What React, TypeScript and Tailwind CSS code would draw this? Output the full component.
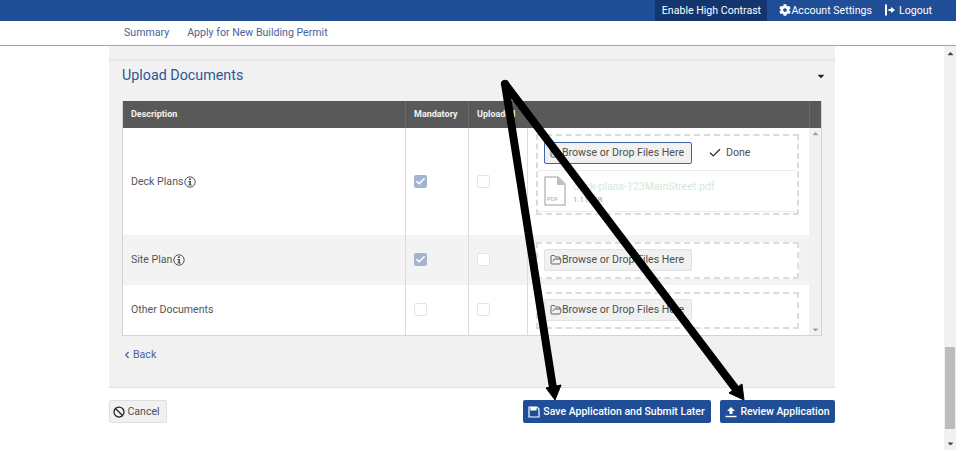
import { Ban, Check, ChevronLeft, FolderOpen } from "lucide-react"
import { FaCog, FaCaretDown, FaCaretUp } from "react-icons/fa"

function InfoIcon() {
  return (
    <svg width="12" height="12" viewBox="0 0 12 12" className="inline-block shrink-0 text-[#555]">
      <circle cx="6" cy="6" r="5.2" fill="none" stroke="currentColor" strokeWidth="1" />
      <rect x="5" y="2.4" width="2" height="1.6" fill="currentColor" />
      <path d="M4.4 5h2.6v3.4h.8v1H4.4v-1h.9V6h-.9z" fill="currentColor" />
    </svg>
  )
}

function CheckBox({ checked }: { checked?: boolean }) {
  if (checked) {
    return (
      <span className="flex h-[13px] w-[13px] items-center justify-center rounded-[2px] bg-[#a3b4d1]">
        <Check size={11} strokeWidth={3.5} className="text-white" />
      </span>
    )
  }
  return <span className="block h-[13px] w-[13px] rounded-[2px] border border-[#e4e4e4] bg-white" />
}

function BrowseButton({ focused }: { focused?: boolean }) {
  return (
    <button
      className={
        "flex h-[22px] w-[148px] items-center justify-center whitespace-nowrap rounded-[2px] border bg-[#f1f1f1] pr-[2px] text-[10.6px] text-[#4f4f4f] " +
        (focused ? "border-[#3f66ad]" : "border-[#e2e2e2]")
      }
    >
      <FolderOpen size={12} strokeWidth={1.5} className="shrink-0 text-[#333]" />
      Browse or Drop Files Here
    </button>
  )
}

function DocRow({
  name,
  info,
  mandatory,
  shaded,
  height,
  children,
}: {
  name: string
  info?: boolean
  mandatory?: boolean
  shaded?: boolean
  height: string
  children: React.ReactNode
}) {
  return (
    <div className={"flex " + height + (shaded ? " bg-[#f3f3f3]" : " bg-white")}>
      <div className="flex w-[282px] items-center gap-[1px] pl-[8px] text-[10.6px] text-[#555]">
        {name}
        {info && <InfoIcon />}
      </div>
      <div className="flex w-[63px] items-center border-l border-[#dcdcdc] pb-[1px] pl-[8px]">
        <CheckBox checked={mandatory} />
      </div>
      <div className="flex w-[59px] items-center border-l border-[#dcdcdc] pb-[1px] pl-[8px]">
        <CheckBox />
      </div>
      <div className="flex-1 border-l border-[#dcdcdc] pl-[8px] pr-[10px]">{children}</div>
    </div>
  )
}

export default function App() {
  return (
    <div className="relative h-[450px] w-[956px] overflow-hidden bg-white font-['Roboto',sans-serif]">
      <header className="flex h-[21px] items-center justify-end whitespace-nowrap bg-[#1f4e96] text-[10.6px] text-white">
        <div className="flex h-full w-[112px] items-center justify-center bg-[#14366f]">Enable High Contrast</div>
        <div className="ml-[12px] flex items-center">
          <FaCog size={12} />
          Account Settings
        </div>
        <div className="ml-[13px] mr-[24px] flex items-center gap-[4px]">
          <svg width="10" height="12" viewBox="0 0 10 12" fill="white">
            <rect x="0" y="0.5" width="2" height="11" />
            <path d="M3.500 5H6V3l4 3-4 3V7H3.500z" />
          </svg>
          Logout
        </div>
      </header>

      <nav className="flex h-[25px] items-center gap-[18px] border-b border-[#8ea5cf] pl-[124px] text-[10.6px] text-[#46639c]">
        <span>Summary</span>
        <span>Apply for New Building Permit</span>
      </nav>

      <div className="flex">
        <main className="ml-[109px] w-[726px]">
          <section className="h-[342px] border-b border-[#e0e0e0] bg-[#f1f1f1]">
            <div className="h-[15px] border-b-2 border-[#e6e6e6]" />
            <div className="flex h-[40px] items-center justify-between pb-[10px] pl-[13px] pr-[9px]">
              <h2 className="text-[14.3px] text-[#2f5597]">Upload Documents</h2>
              <FaCaretDown size={10} className="text-[#222]" />
            </div>

            <div className="mx-[13px] border border-t-0 border-[#d4d4d4] bg-white">
              <div className="flex h-[27px] items-center bg-[#595959] text-[9px] font-bold text-[#f2f2f2]">
                <div className="w-[282px] pl-[8px]">Description</div>
                <div className="flex h-full w-[63px] items-center border-l border-[#6b6b6b] pl-[8px]">Mandatory</div>
                <div className="flex h-full w-[59px] items-center border-l border-[#6b6b6b] pl-[8px]">Uploaded</div>
                <div className="h-full flex-1" />
                <div className="h-full w-[12px] border-l border-[#6b6b6b]" />
              </div>

              <div className="flex">
                <div className="w-[686px]">
                  <DocRow name="Deck Plans" info mandatory height="h-[107px]">
                    <div className="mt-[6px] h-[81px] border-2 border-dashed border-[#dcdcdc]">
                      <div className="flex h-[35px] items-center border-b border-[#ececec] pl-[6px]">
                        <BrowseButton focused />
                        <Check size={14} strokeWidth={2} className="ml-[16px] text-[#222]" />
                        <span className="ml-[4px] text-[10.6px] text-[#4f4f4f]">Done</span>
                      </div>
                      <div className="flex h-[41px] items-center border-b border-[#ececec] pl-[6px]">
                        <svg width="22" height="30" viewBox="0 0 22 30" className="shrink-0">
                          <path d="M1 1h13l7 7v21H1z" fill="#fff" stroke="#bdbdbd" strokeWidth="1.500" />
                          <path d="M13 1v8h8z" fill="#bdbdbd" />
                          <text x="3" y="25" fontSize="6" fill="#aaa">PDF</text>
                        </svg>
                        <div className="ml-[7px] pt-[2px]">
                          <div className="text-[10.6px] leading-[15px] text-[#d5ead9]">deck-plans-123MainStreet.pdf</div>
                          <div className="text-[8px] leading-[12px] text-[#aaa]">1.11 MB</div>
                        </div>
                      </div>
                    </div>
                  </DocRow>
                  <DocRow name="Site Plan" info mandatory shaded height="h-[50px]">
                    <div className="mt-[7px] flex h-[37px] items-center border-2 border-dashed border-[#dcdcdc] bg-white pb-[1px] pl-[6px]">
                      <BrowseButton />
                    </div>
                  </DocRow>
                  <DocRow name="Other Documents" height="h-[50px]">
                    <div className="mt-[7px] flex h-[37px] items-center border-2 border-dashed border-[#dcdcdc] bg-white pb-[1px] pl-[6px]">
                      <BrowseButton />
                    </div>
                  </DocRow>
                </div>
                <div className="flex w-[12px] flex-col items-center justify-between bg-[#f1f1f1] py-[1px] text-[#a0a0a0]">
                  <FaCaretUp size={9} />
                  <FaCaretDown size={9} />
                </div>
              </div>
            </div>

            <div className="mt-[11px] flex items-center pl-[13px] text-[10.6px] text-[#46639c]">
              <ChevronLeft size={10} strokeWidth={3} className="mr-[1px]" />
              Back
            </div>
          </section>

          <div className="mt-[12px] flex items-center whitespace-nowrap">
            <button className="flex h-[23px] w-[58px] items-center justify-center gap-[2px] rounded-[2px] border border-[#dfdfdf] bg-[#f1f1f1] pr-[3px] text-[10.6px] text-[#4f4f4f]">
              <Ban size={12} strokeWidth={2.5} className="text-[#222]" />
              Cancel
            </button>
            <button className="ml-[356px] flex h-[23px] w-[188px] items-center justify-center gap-[3px] rounded-[2px] bg-[#1f4e96] pr-[1px] text-[10.5px] font-medium text-white">
              <svg width="12" height="12" viewBox="0 0 12 12" fill="none" stroke="white" strokeWidth="1.200">
                <path d="M1 1h8l2 2v8H1z" />
                <path d="M3 1v3h5V1" fill="white" />
              </svg>
              Save Application and Submit Later
            </button>
            <button className="ml-[9px] flex h-[23px] w-[115px] items-center justify-center gap-[3px] rounded-[2px] bg-[#1f4e96] text-[10.5px] font-medium text-white">
              <svg width="12" height="12" viewBox="0 0 12 12" fill="white">
                <path d="M6 1l4 4H7.500v3h-3V5H2z" />
                <rect x="0.500" y="9.800" width="11" height="1.400" />
              </svg>
              Review Application
            </button>
          </div>
        </main>

        <aside className="absolute bottom-0 right-0 top-[46px] flex w-[12px] flex-col items-center justify-between bg-[#f1f1f1] pb-[2px] pt-[3px] text-[#444]">
          <FaCaretUp size={9} />
          <div className="absolute bottom-[21px] left-[1px] h-[82px] w-[10px] bg-[#bcbcbc]" />
          <FaCaretDown size={9} />
        </aside>
      </div>

      {/* annotation arrows drawn over the screenshot */}
      <svg width="956" height="450" viewBox="0 0 956 450" className="pointer-events-none absolute left-0 top-0">
        <path d="M505 84 L553 388" stroke="#000" strokeWidth="8" strokeLinecap="round" fill="none" />
        <path d="M505 84 L735 388" stroke="#000" strokeWidth="8" strokeLinecap="round" fill="none" />
        <path d="M546 388 L561 385 L555 400z" fill="#000" stroke="#000" strokeWidth="1" />
        <path d="M729 393 L742 384 L744 400z" fill="#000" stroke="#000" strokeWidth="1" />
      </svg>
    </div>
  )
}
